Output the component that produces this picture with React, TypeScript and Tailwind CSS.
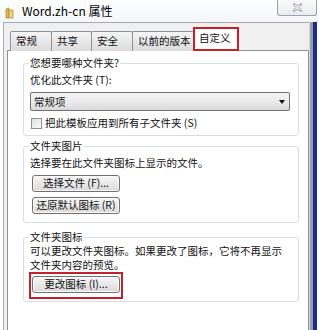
import React from "react";

const FONT = "font-['Noto_Sans_CJK_SC','Noto_Sans',sans-serif]";

function Btn({ children }: { children: React.ReactNode }) {
  return (
    <div className="w-[88px] h-[17px] border border-[#707070] rounded-[3px] bg-gradient-to-b from-[#f6f6f6] via-[#e9e9e9] to-[#d9d9d9] shadow-[inset_0_0_0_1px_#fcfcfc] flex items-center justify-center text-[10.5px] leading-none text-[#111]">
      {children}
    </div>
  );
}

function Group({ label, className, children }: { label: string; className: string; children: React.ReactNode }) {
  return (
    <div className={`relative ml-[15px] w-[276px] border border-[#d5dfe5] rounded-[3px] ${className}`}>
      <div className="absolute -top-[8px] left-[5px] bg-white px-[1px] text-[10.5px] leading-[14px] text-[#111]">{label}</div>
      {children}
    </div>
  );
}

export default function App() {
  const tabs = ["常规", "共享", "安全", "以前的版本"];
  const tabW = ["w-[42px]", "w-[41px]", "w-[42px]", "w-[62px]"];
  return (
    <div className={`w-[319px] h-[330px] bg-white flex flex-col overflow-hidden ${FONT}`}>
      {/* title bar */}
      <div className="h-[22px] flex items-start bg-gradient-to-b from-[#ffffff] to-[#f4f6f9]">
        <svg className="mt-[7px] ml-[5px]" width="9" height="12" viewBox="0 0 9 12">
          <path d="M1 2 L4 1 L4 11 L1 11 Z" fill="#e2b650" stroke="#b08a30" strokeWidth="0.7" />
          <path d="M4 3 L8 3 L8 11 L4 11 Z" fill="#f2d27a" stroke="#b08a30" strokeWidth="0.7" />
        </svg>
        <div className="ml-[8px] mt-[4px] text-[12px] leading-[14px] text-black">Word.zh-cn 属性</div>
        <div className="ml-auto mr-[2px] w-[40px] h-[16px] border border-t-0 border-[#9aa3ad] rounded-b-[3px] bg-gradient-to-b from-[#fbfbfb] to-[#e8ebee] flex items-center justify-center">
          <svg width="11" height="9" viewBox="0 0 11 9">
            <path d="M1 1 L3.5 1 L5.5 3.2 L7.5 1 L10 1 L6.8 4.5 L10 8 L7.5 8 L5.5 5.8 L3.5 8 L1 8 L4.2 4.5 Z" fill="#ffffff" stroke="#8a9098" strokeWidth="0.9" strokeLinejoin="round" />
          </svg>
        </div>
      </div>
      {/* body */}
      <div className="flex flex-1">
        <div className="w-[3px] bg-white" />
        <div className="flex flex-col flex-1 border-l border-t border-[#a8aab0] bg-[#f0f0f0] pl-[3px] pt-[4px]">
          {/* tabs */}
          <div className="flex items-end ml-[3px] h-[24px] relative z-10 -mb-px">
            {tabs.map((t, i) => (
              <div
                key={t}
                className={`${tabW[i]} h-[20px] border border-b-0 border-[#8e9199] ${i > 0 ? "-ml-px" : ""} rounded-t-[2px] bg-gradient-to-b from-[#f5f5f5] to-[#dcdcdc] text-[10.5px] leading-[18px] pl-[5px] text-[#111] whitespace-nowrap`}
              >
                {t}
              </div>
            ))}
            <div className="relative w-[46px] h-[24px] -ml-px border border-b-0 border-[#8e9199] rounded-t-[2px] bg-white text-[10.5px] leading-[20px] pl-[5px] text-[#111]">
              自定义
              <div className="absolute -inset-x-px -top-px bottom-0 border-2 border-[#c4222b]" />
            </div>
          </div>
          {/* panel */}
          <div className="w-[302px] flex-1 border border-b-0 border-[#8e9199] bg-white">
            <Group label="您想要哪种文件夹?" className="mt-[12px] pt-[9px] pl-[6px] pb-[5px]">
              <div className="text-[10.5px] leading-[14px] text-[#111]">优化此文件夹 (T):</div>
              <div className="mt-[5px] w-[260px] h-[19px] border border-[#707070] rounded-[2px] bg-gradient-to-b from-[#f4f4f4] via-[#ebebeb] to-[#dadada] flex items-center pl-[3px] pr-[4px] text-[10.5px] text-[#111]">
                常规项
                <svg className="ml-auto" width="6" height="4" viewBox="0 0 6 4">
                  <path d="M0 0 L6 0 L3 4 Z" fill="#111" />
                </svg>
              </div>
              <div className="mt-[5px] h-[14px] flex items-center">
                <div className="w-[11px] h-[11px] border border-[#8f8f8f] bg-gradient-to-br from-[#e0e0e0] to-[#fbfbfb] ml-[1px]" />
                <div className="ml-[3px] text-[10.5px] leading-[14px] text-[#111]">把此模板应用到所有子文件夹 (S)</div>
              </div>
            </Group>
            <Group label="文件夹图片" className="mt-[10px] pt-[9px] pl-[8px] pb-[8px]">
              <div className="-ml-[2px] text-[10.5px] leading-[14px] text-[#111]">选择要在此文件夹图标上显示的文件。</div>
              <div className="mt-[5px]"><Btn>选择文件 (F)...</Btn></div>
              <div className="mt-[5px]"><Btn>还原默认图标 (R)</Btn></div>
            </Group>
            <Group label="文件夹图标" className="mt-[14px] pt-[6px] pl-[6px] pb-[2px]">
              <div className="text-[10.5px] leading-[14px] text-[#111]">
                <div>可以更改文件夹图标。如果更改了图标，它将不再显示</div>
                <div>文件夹内容的预览。</div>
              </div>
              <div className="-ml-[1px] w-[94px] border-2 border-[#c4222b] pl-[1px] pt-[2px] pb-[4px]">
                <Btn>更改图标 (I)...</Btn>
              </div>
            </Group>
          </div>
        </div>
        <div className="w-[1px] bg-[#d8d8d8]" />
        <div className="w-[3px] bg-[#9a9da3]" />
        <div className="w-[4px] bg-[#1b2a8e]" />
        <div className="w-[2px] bg-white" />
      </div>
    </div>
  );
}
